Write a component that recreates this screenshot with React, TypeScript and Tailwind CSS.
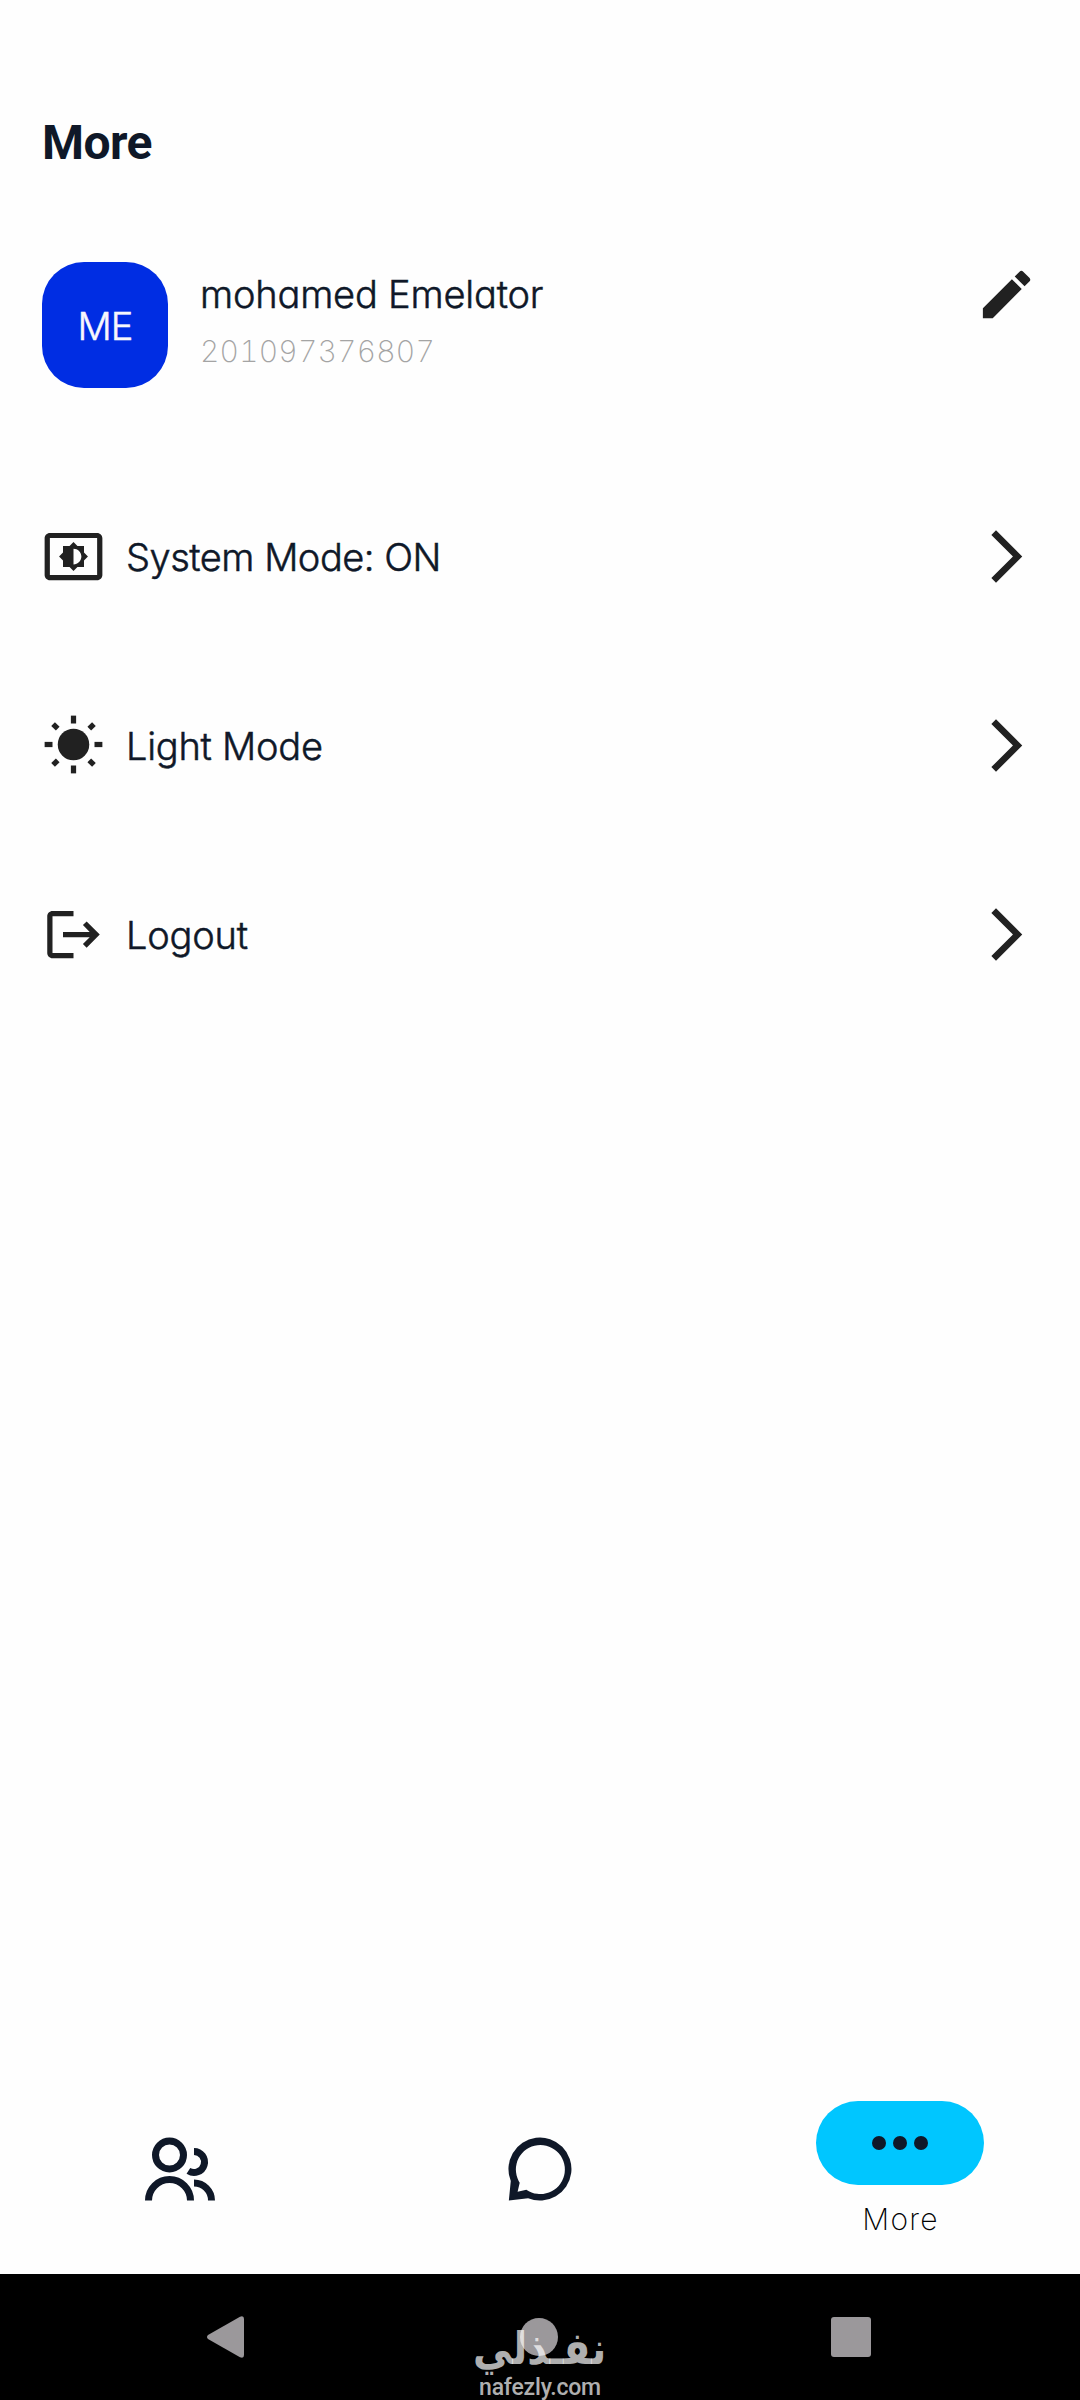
import type { ReactNode } from 'react';
import { MdEdit, MdSettingsBrightness, MdLogout, MdArrowForwardIos } from 'react-icons/md';

const label =
  "font-['Inter'] font-light whitespace-nowrap [font-feature-settings:'cv11','ss03'] [-webkit-text-stroke:0.5px_#0f1828] text-[#0f1828] text-[38px] leading-[46px]";

function SunIcon() {
  const angles = [0, 45, 90, 135, 180, 225, 270, 315];
  return (
    <svg viewBox="0 0 24 24" className="-mt-[2px] size-[63px]" stroke="currentColor" strokeWidth="2">
      <circle cx="12" cy="12" r="6" fill="currentColor" stroke="none" />
      {angles.map((a) => (
        <path
          key={a}
          d={a % 90 === 0 ? 'M12 1v3' : 'M12 1v2.5'}
          transform={`rotate(${a} 12 12)`}
        />
      ))}
    </svg>
  );
}

function PeopleIcon() {
  return (
    <svg viewBox="0 0 24 24" className="size-[84px]" fill="none" stroke="currentColor" strokeWidth="2">
      <circle cx="9" cy="8" r="4" />
      <path d="M3 21a6 6 0 0 1 12 0" />
      <path d="M16 7a3 3 0 1 1-1.6 5.54" />
      <path d="M16 16a5 5 0 0 1 5 5" />
    </svg>
  );
}

function ChatIcon() {
  return (
    <svg viewBox="0 0 24 24" className="size-[84px]" fill="currentColor" fillRule="evenodd">
      <path d="M3.65 15.4A9 9 0 1 1 8.6 20.35L3.1 21ZM6.2 15.9 5.6 18.5 8.1 17.9A7 7 0 1 0 5.9 15.4Z" />
    </svg>
  );
}

function Row({ icon, children }: { icon: ReactNode; children: ReactNode }) {
  return (
    <div className="flex h-[63px] items-center text-[#212121]">
      <div className="w-[84px] shrink-0">{icon}</div>
      <div className="flex-1">{children}</div>
      <MdArrowForwardIos className="size-[63px]" />
    </div>
  );
}

export default function App() {
  return (
    <div className="flex h-[2400px] w-[1080px] flex-col overflow-hidden bg-[#fefefe]">
      <header className="px-[42px] pt-[115px]">
        <h1 className="font-['Roboto'] text-[48px] leading-[56px] font-bold tracking-[-0.6px] text-[#0f1828]">
          More
        </h1>
      </header>

      <section className="mt-[91px] flex h-[126px] px-[42px]">
        <div className="flex size-[126px] items-center justify-center rounded-[42px] bg-[#002de3]">
          <span className="mt-[2px] font-['Inter'] text-[38px] leading-[46px] font-light tracking-[-1px] text-[#f7f7fc] [-webkit-text-stroke:0.5px_#f7f7fc]">
            ME
          </span>
        </div>
        <div className="ml-[32px] flex flex-1 flex-col">
          <p className={`${label} mt-[9px] tracking-[-0.2px]`}>mohamed Emelator</p>
          <p className="mt-[15px] font-['Inter'] text-[30px] leading-[38px] font-extralight tracking-[0.2px] text-[#a4a4a4] tabular-nums">
            201097376807
          </p>
        </div>
        <MdEdit className="mt-px size-[63px] text-[#212121]" />
      </section>

      <main className="mt-[137px] flex flex-col gap-[126px] px-[42px]">
        <Row icon={<MdSettingsBrightness className="size-[63px]" />}>
          <p className={`${label} tracking-[-0.5px]`}>System Mode: ON</p>
        </Row>
        <Row icon={<SunIcon />}>
          <p className={`${label} tracking-[-0.25px]`}>Light Mode</p>
        </Row>
        <Row icon={<MdLogout className="size-[63px]" />}>
          <p className={`${label} tracking-[-0.2px]`}>Logout</p>
        </Row>
      </main>

      <nav className="mt-auto grid h-[210px] grid-cols-3 text-[#0f1828]">
        <div className="flex justify-center pt-[63px]">
          <PeopleIcon />
        </div>
        <div className="flex justify-center pt-[63px]">
          <ChatIcon />
        </div>
        <div className="flex flex-col items-center pt-[37px]">
          <div className="flex h-[84px] w-[168px] items-center justify-center gap-[7px] rounded-full bg-[#00c6ff]">
            <span className="size-[14px] rounded-full bg-[#0f1828]" />
            <span className="size-[14px] rounded-full bg-[#0f1828]" />
            <span className="size-[14px] rounded-full bg-[#0f1828]" />
          </div>
          <p className="mt-[15px] pl-px font-['Inter'] text-[30px] leading-[38px] font-extralight tracking-[1.2px] text-black">
            More
          </p>
        </div>
      </nav>

      <footer className="relative h-[126px] shrink-0 bg-black">
        <div className="flex h-[126px] items-center justify-between pr-[209px] pl-[207px] text-[#9b989b]">
          <svg viewBox="0 0 37 42" className="h-[42px] w-[37px]" fill="currentColor">
            <path d="M1 19 33 .8Q37-.8 37 3V39Q37 42.800 33 41.200L1 23Q-1 21 1 19Z" />
          </svg>
          <div className="ml-[2px] size-[38px] rounded-full bg-[#9b989b]" />
          <div className="size-[40px] rounded-[3px] bg-[#9b989b]" />
        </div>
        <div className="absolute top-[43px] left-[470px] flex w-[140px] flex-col items-center text-white/70">
          <span
            dir="rtl"
            className="h-[60px] scale-x-[.87] font-['DejaVu_Sans'] text-[45px] leading-[64px] font-bold whitespace-nowrap"
          >
            نفـذلي
          </span>
          <span className="-mt-[2px] font-['Roboto'] text-[23px] leading-[26px] font-medium tracking-[-0.2px]">
            nafezly.com
          </span>
        </div>
      </footer>
    </div>
  );
}
